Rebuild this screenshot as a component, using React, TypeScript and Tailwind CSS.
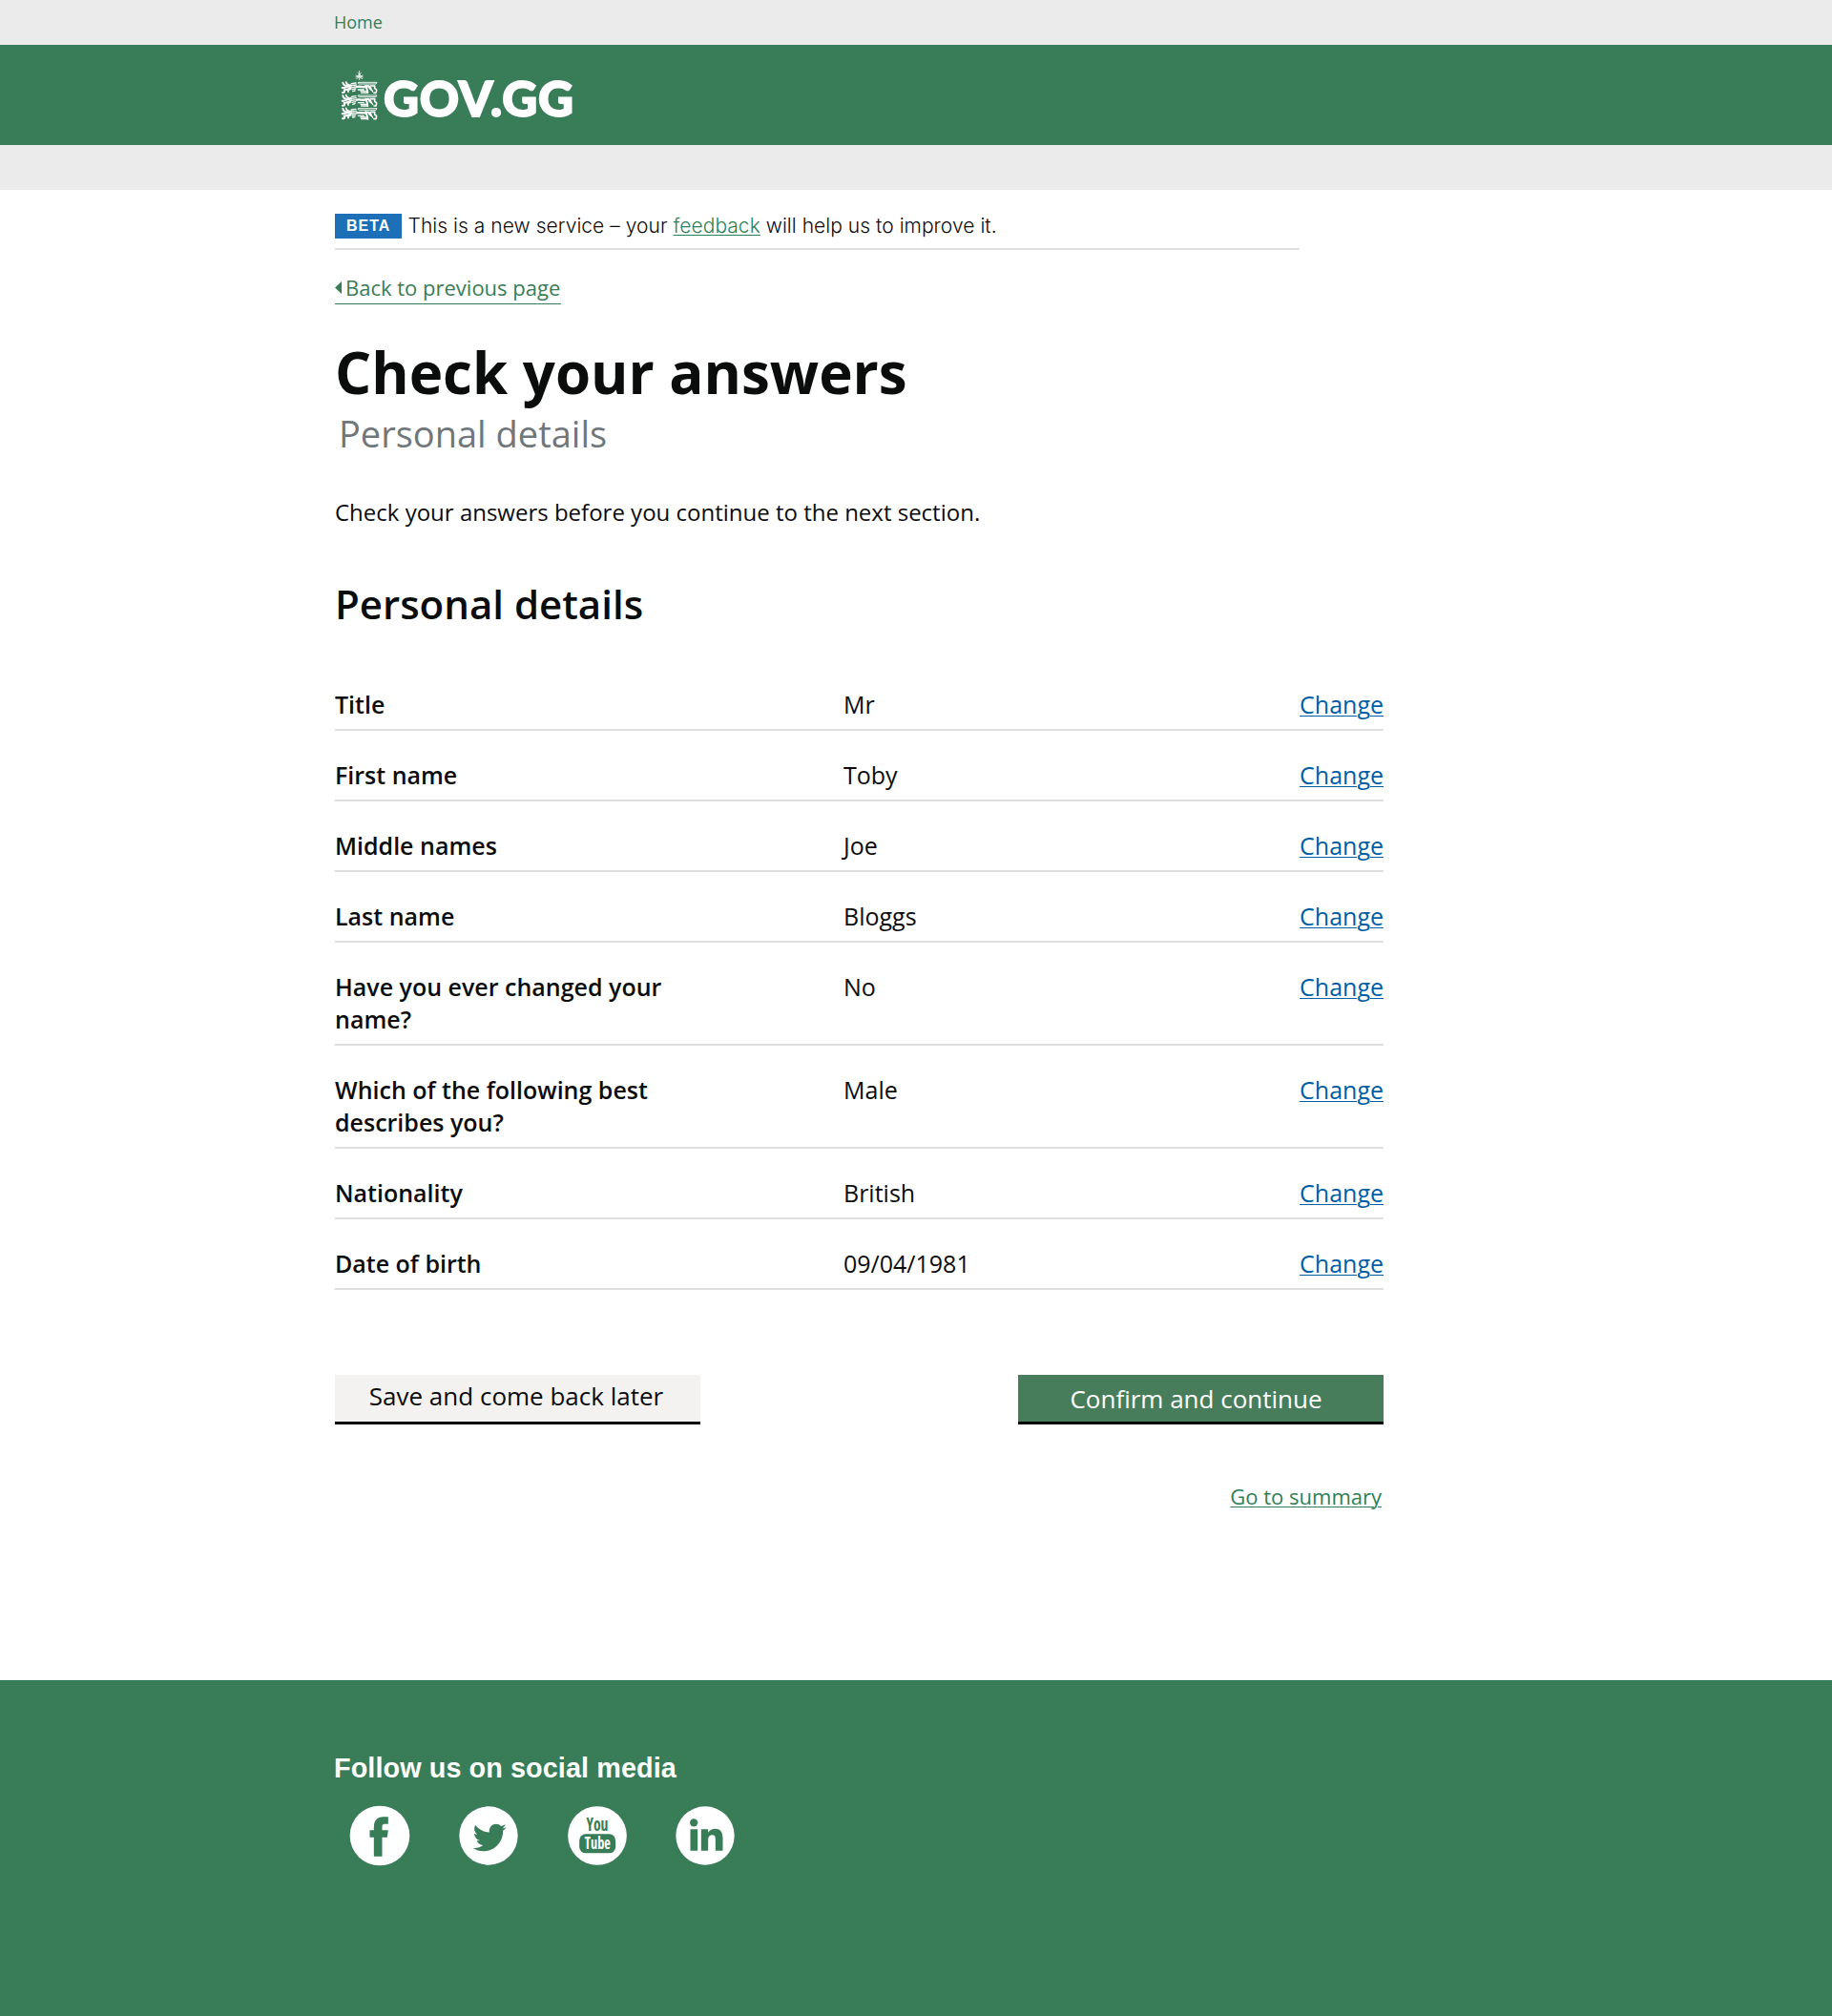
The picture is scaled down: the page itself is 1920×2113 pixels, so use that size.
import type { ReactNode } from "react";

type Row = { label: string; value: string };

const rows: Row[] = [
  { label: "Title", value: "Mr" },
  { label: "First name", value: "Toby" },
  { label: "Middle names", value: "Joe" },
  { label: "Last name", value: "Bloggs" },
  { label: "Have you ever changed your name?", value: "No" },
  { label: "Which of the following best describes you?", value: "Male" },
  { label: "Nationality", value: "British" },
  { label: "Date of birth", value: "09/04/1981" },
];

/* One lion passant of the crest; drawn in a 114 x 38 box. */
function Lion({ y }: { y: number }) {
  return (
    <g transform={`translate(0 ${y})`} fill="none" stroke="#fff" strokeLinecap="round" strokeLinejoin="round">
      <path d="M4 4C5 10 12 15 24 14" strokeWidth="6" />
      <path d="M14 2C15 8 19 11 26 12" strokeWidth="5" />
      <path d="M2 20H8C14 17 20 18 29 12" strokeWidth="6" />
      <path d="M3 35H6C10 34 10 32 8 27C14 26 24 26 30 18" strokeWidth="6" />
      <path d="M21 33C18 29 22 27 28 24" strokeWidth="5" />
      <path d="M31 7L45 5M30 13L46 11M32 19L46 17M33 25L44 23M35 31L42 29" strokeWidth="4" />
      <path d="M53 3H111L108 8H56C51 8 50 3 54 3" strokeWidth="2.8" />
      <path d="M48 17C58 14 66 20 76 16C86 12 90 18 92 24" strokeWidth="7" />
      <path d="M52 26H70M60 31H80M62 36H80" strokeWidth="4" />
      <path d="M76 14C78 22 82 26 82 36" strokeWidth="6" />
      <path d="M92 14H104V21C104 25 110 23 110 28L108 36H102" strokeWidth="5" />
      <path d="M86 20C90 26 96 24 98 32" strokeWidth="4" />
    </g>
  );
}

function Logo() {
  return (
    <svg width="260" height="72" viewBox="-1 -6 260 72" className="block overflow-visible" role="img" aria-label="GOV.GG">
      <g transform="translate(7 1) scale(0.3333)">
        <path d="M56 0V30M50 7L62 17M62 7L50 17M44 15L68 21M68 15L44 21M46 26L56 20L66 26" stroke="#fff" strokeWidth="2.4" fill="none" />
        <Lion y={34} />
        <Lion y={75} />
        <Lion y={116} />
      </g>
      <text
        x="51"
        y="49.2"
        textLength="199"
        lengthAdjust="spacing"
        fill="#fff"
        stroke="#fff"
        strokeWidth="1.8"
        className="font-['Lato'] text-[51px] font-black"
      >
        GOV.GG
      </text>
    </svg>
  );
}

function SocialIcon({ label, cx, r, children }: { label: string; cx: number; r: number; children: ReactNode }) {
  return (
    <a href="#" aria-label={label} className="block">
      <svg width="64" height="64" viewBox={`${cx - 96} 455 192 192`}>
        <circle cx={cx} cy="551" r={r} fill="#fff" />
        {children}
      </svg>
    </a>
  );
}

export default function App() {
  return (
    <div className="flex min-h-[2113px] w-full flex-col bg-white font-['Open_Sans',sans-serif] text-[#0b0c0c]">
      <div className="h-[47px] bg-[#ebebeb] pl-[350px] text-[18px] leading-[47px] text-[#387d57]">Home</div>
      <header className="h-[105px] bg-[#387d57] pt-5 pl-[350px]">
        <Logo />
      </header>
      <div className="h-[47px] bg-[#ebebeb]" />

      <main className="ml-[351px] w-[1099px]">
        <div className="flex w-[1011px] border-b-2 border-[#dedede] pt-[25px] pb-[10px]">
          <strong className="w-[70px] bg-[#1d70b8] pl-3 font-['Liberation_Sans',sans-serif] text-[16px] leading-[26px] tracking-[1px] text-white">
            BETA
          </strong>
          <span className="ml-[6.5px] font-['Inter',sans-serif] text-[21px] leading-[26px] font-light tracking-[0.04px]">
            This is a new service – your{" "}
            <a href="#" className="text-[#2e8157] underline decoration-1 underline-offset-2">feedback</a> will help us to improve it.
          </span>
        </div>

        <a href="#" className="mt-[24px] flex w-[236.5px] items-center border-b border-[#387d57] pb-[2px] text-[22px] leading-[30px] text-[#387d57]">
          <svg width="7" height="13" viewBox="0 0 7 13" className="mt-px mr-1 shrink-0">
            <path d="M7 0V13L0 6.5Z" fill="#387d57" />
          </svg>
          <span className="whitespace-nowrap">Back to previous page</span>
        </a>

        <h1 className="mt-[36px] text-[60px] leading-[70px] font-bold">Check your answers</h1>
        <p className="mt-[4px] pl-[4px] text-[38px] leading-[50px] text-[#6f777b]">Personal details</p>
        <p className="mt-[41px] text-[24px] leading-[34px]">Check your answers before you continue to the next section.</p>
        <h2 className="mt-[51px] text-[42px] leading-[56px] font-semibold">Personal details</h2>

        <dl className="mt-[31px] text-[25px] leading-[34px]">
          {rows.map((row) => (
            <div key={row.label} className="flex items-start border-b-2 border-[#dedede] pt-[29px] pb-[9px]">
              <dt className="w-[533px] pr-[160px] font-semibold">{row.label}</dt>
              <dd className="flex-1">{row.value}</dd>
              <dd>
                <a href="#" className="text-[#005ea5] underline decoration-1 underline-offset-2">Change</a>
              </dd>
            </div>
          ))}
        </dl>

        <div className="mt-[89px] flex justify-between text-[26px] leading-[36px]">
          <button className="h-[52px] w-[383px] border-b-[3px] border-black bg-[#f3f2f1] pr-[3px] pb-[5px]">Save and come back later</button>
          <button className="h-[52px] w-[383px] border-b-[3px] border-black bg-[#477d5b] pt-px pr-[10px] text-white">Confirm and continue</button>
        </div>

        <div className="mt-[60px] mr-[2px] flex justify-end text-[22px] leading-[30px]">
          <a href="#" className="text-[#2e8157] underline decoration-1 underline-offset-2">Go to summary</a>
        </div>
      </main>

      <footer className="mt-[178px] flex-1 bg-[#387d57] pt-[72px] pl-[350px]">
        <h2 className="font-['Liberation_Sans',sans-serif] text-[28.8px] leading-[40px] font-bold tracking-[0.08px] text-white">
          Follow us on social media
        </h2>
        <div className="mt-[19px] flex gap-[49.7px] pl-[16.4px]">
          <SocialIcon label="Facebook" cx={175.5} r={94}>
            <path
              fill="#387d57"
              d="M157 616V556H144V534H157V524C157 503 168 492 186 492H202V514H190C185 514 183 518 183 523V534H202L199 556H183V616Z"
            />
          </SocialIcon>
          <SocialIcon label="Twitter" cx={517} r={92}>
            <path
              fill="#387d57"
              transform="translate(468 504.5) scale(0.2051)"
              d="M459.37 151.716c.325 4.548.325 9.097.325 13.645 0 138.72-105.583 298.558-298.558 298.558-59.452 0-114.68-17.219-161.137-47.106 8.447.974 16.568 1.299 25.34 1.299 49.055 0 94.213-16.568 130.274-44.832-46.132-.975-84.792-31.188-98.112-72.772 6.498.974 12.995 1.624 19.818 1.624 9.421 0 18.843-1.3 27.614-3.573-48.081-9.747-84.143-51.98-84.143-102.985v-1.299c13.969 7.797 30.214 12.67 47.431 13.319-28.264-18.843-46.781-51.005-46.781-87.391 0-19.492 5.197-37.36 14.294-52.954 51.655 63.675 129.3 105.258 216.365 109.807-1.624-7.797-2.599-15.918-2.599-24.04 0-57.828 46.782-104.934 104.934-104.934 30.213 0 57.502 12.67 76.67 33.137 23.715-4.548 46.456-13.32 66.599-25.34-7.798 24.366-24.366 44.833-46.132 57.827 21.117-2.273 41.584-8.122 60.426-16.243-14.292 20.791-32.161 39.308-52.628 54.253z"
            />
          </SocialIcon>
          <SocialIcon label="YouTube" cx={857.5} r={92.5}>
            <text
              x="823"
              y="536"
              textLength="69"
              lengthAdjust="spacingAndGlyphs"
              fill="#387d57"
              className="font-['Open_Sans'] text-[60px] font-bold [font-stretch:75%]"
            >
              You
            </text>
            <rect x="801" y="546" width="114" height="60" rx="20" fill="#387d57" />
            <text
              x="818"
              y="592"
              textLength="81"
              lengthAdjust="spacingAndGlyphs"
              fill="#fff"
              className="font-['Open_Sans'] text-[54px] font-bold [font-stretch:75%]"
            >
              Tube
            </text>
          </SocialIcon>
          <SocialIcon label="LinkedIn" cx={1198.5} r={92}>
            <circle cx="1163" cy="510" r="12.5" fill="#387d57" />
            <path
              fill="#387d57"
              d="M1152 531H1175V598H1152ZM1186 531H1208V541C1213 533 1221 529 1231 529C1247 529 1254 540 1254 560V598H1231V563C1231 553 1228 549 1221 549C1213 549 1208 554 1208 563V598H1186Z"
            />
          </SocialIcon>
        </div>
      </footer>
    </div>
  );
}
